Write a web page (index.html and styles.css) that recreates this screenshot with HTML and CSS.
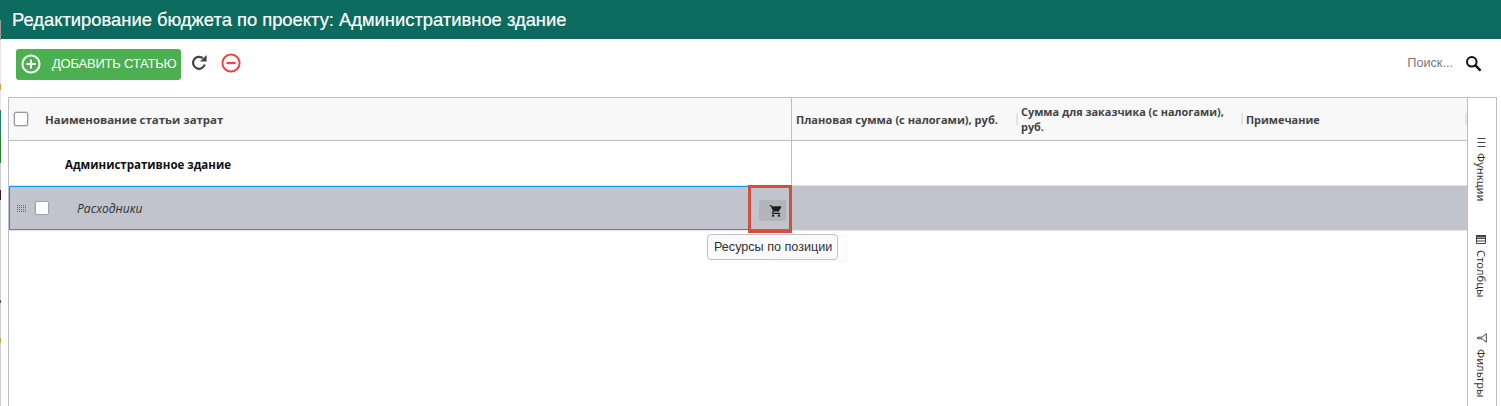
FILE: index.html
```html
<!DOCTYPE html>
<html lang="ru">
<head>
<meta charset="utf-8">
<title>Редактирование бюджета</title>
<link rel="stylesheet" href="styles.css">
</head>
<body>
<div class="app">
  <div class="edge"></div>
  <main class="page">
    <header class="title-bar">Редактирование бюджета по проекту: Административное здание</header>
    <div class="toolbar">
      <button class="add-btn">
        <svg class="add-icon" width="20" height="20" viewBox="0 0 20 20"><circle cx="10" cy="10" r="8.6" fill="none" stroke="#fff" stroke-width="2"/><path d="M10 5.400v9.200M5.400 10h9.200" stroke="#fff" stroke-width="2"/></svg>
        <span>ДОБАВИТЬ СТАТЬЮ</span>
      </button>
      <svg class="tool-icon refresh" width="16" height="16" viewBox="0 0 16 16"><path d="M13.800 9.500A6 6 0 1 1 11.900 3.200" fill="none" stroke="#444" stroke-width="2.200"/><path d="M9 6.600h6.600V0z" fill="#444"/></svg>
      <svg class="tool-icon remove" width="20" height="20" viewBox="0 0 20 20"><circle cx="10" cy="10" r="8.600" fill="none" stroke="#f0453a" stroke-width="2"/><path d="M5.400 10h9.200" stroke="#f0453a" stroke-width="2.200"/></svg>
      <div class="search">
        <span class="search-text">Поиск...</span>
        <svg width="17" height="17" viewBox="0 0 17 17"><circle cx="6.800" cy="6.800" r="4.800" fill="none" stroke="#111" stroke-width="2"/><path d="M10.400 10.400l5.200 5.200" stroke="#111" stroke-width="2.400"/></svg>
      </div>
    </div>
    <section class="grid">
      <div class="grid-main">
        <div class="grid-head">
          <div class="head-left">
            <span class="checkbox head-check"></span>
            <span class="head-title">Наименование статьи затрат</span>
          </div>
          <div class="head-right">
            <div class="col col-plan">Плановая сумма (с налогами), руб.</div>
            <div class="col col-client">Сумма для заказчика (с налогами), руб.</div>
            <div class="col col-note">Примечание</div>
          </div>
        </div>
        <div class="row row-group">
          <div class="cell-left group-name">Административное здание</div>
          <div class="cell-right"></div>
        </div>
        <div class="row row-selected">
          <div class="cell-left sel-left">
            <svg class="drag" width="10" height="7" viewBox="0 0 10 7"><path d="M0 .5h10M0 2.500h10M0 4.500h10M0 6.500h10" stroke="#666" stroke-dasharray="1 1" stroke-width="1"/></svg>
            <span class="checkbox row-check"></span>
            <span class="item-name">Расходники</span>
            <span class="cart-btn">
              <svg width="14" height="14" viewBox="0 0 24 24"><path fill="#1c1c1c" d="M7 18c-1.100 0-2 .9-2 2s.9 2 2 2 2-.9 2-2-.9-2-2-2zM1 2v2h2l3.600 7.600-1.400 2.400c-.1.300-.2.600-.2 1 0 1.100.9 2 2 2h12v-2H7.400c-.1 0-.2-.1-.2-.2v-.1L8.100 13h7.500c.7 0 1.400-.4 1.700-1l3.600-6.500c.1-.1.1-.3.1-.5 0-.6-.4-1-1-1H5.200l-.9-2H1zm16 16c-1.100 0-2 .9-2 2s.9 2 2 2 2-.9 2-2-.9-2-2-2z"/></svg>
            </span>
          </div>
          <div class="cell-right sel-right"></div>
          <div class="highlight"></div>
          <div class="tooltip-ghost"></div>
          <div class="tooltip">Ресурсы по позиции</div>
        </div>
      </div>
      <aside class="side">
        <div class="side-tab tab-func">
          <svg width="9" height="9" viewBox="0 0 9 9"><path d="M.5.5h8M.5 4.500h8M.5 8.500h8" stroke="#444"/></svg>
          <span>Функции</span>
        </div>
        <div class="side-tab tab-cols">
          <svg width="10" height="9" viewBox="0 0 10 9"><path d="M.5.5h9v8h-9zM.5 3.500h9M.5 6h9" fill="none" stroke="#444"/><path d="M0 0h10v2.500H0z" fill="#444"/></svg>
          <span>Столбцы</span>
        </div>
        <div class="side-tab tab-filter">
          <svg width="11" height="10" viewBox="0 0 11 10"><path d="M10.300.7v8.600L6 5.800H2L1 5l1-.8h4z" fill="none" stroke="#444"/></svg>
          <span>Фильтры</span>
        </div>
      </aside>
    </section>
  </main>
</div>
</body>
</html>
```
FILE: styles.css
```css
* { box-sizing: border-box; }
html, body { margin: 0; height: 100%; overflow: hidden; background: #fff; }
body { font-family: "Open Sans", sans-serif; color: #222; }
.app { display: flex; height: 406px; }
.edge {
  width: 1px; flex: none;
  background: linear-gradient(#0b6b5e 0 20px, #9a9a9a 20px 40px, #e5e5e5 40px 84px, #caa24a 84px 90px, #e5e5e5 90px 110px, #2a7a6a 110px 135px, #2e7d32 135px 163px, #cfcfcf 163px 190px, #3a1a2a 190px 200px, #cfcfcf 200px 300px, #6a4a2a 300px 303px, #cfcfcf 303px 338px, #caa24a 338px 343px, #cfcfcf 343px);
}
.page { flex: 1; min-width: 0; display: flex; flex-direction: column; }
.title-bar {
  height: 39px; flex: none; background: #0b6b5e; color: #fff;
  font: 18.360px/39px "Liberation Sans", sans-serif; padding-left: 11px; white-space: nowrap;
  -webkit-text-stroke: .2px #fff;
}
.toolbar { height: 58px; flex: none; display: flex; align-items: flex-start; padding: 10px 19px 0 15px; }
.add-btn {
  width: 165px; height: 31px; border: 0; border-radius: 3px; background: #4caf50; color: #fff;
  display: flex; align-items: center; padding: 0 0 2px 5px; font: 13px "Liberation Sans", sans-serif; letter-spacing: -.21px;
}
.add-btn span { margin-left: 11px; white-space: nowrap; }
.tool-icon { flex: none; }
.refresh { margin: 6px 0 0 10px; }
.remove { margin: 4px 0 0 14px; }
.search { margin-left: auto; display: flex; align-items: center; height: 28px; }
.search-text { font: 12.700px "Liberation Sans", sans-serif; color: #777; margin-right: 12px; }
.grid {
  margin: 0 4px 0 7px; flex: 1; min-height: 0; display: flex;
  border: 1px solid #bcbfc7; border-bottom: 0;
}
.grid-main { flex: 1; min-width: 0; display: flex; flex-direction: column; }
.grid-head { height: 43px; display: flex; background: #f8f8f8; border-bottom: 1px solid #bcbfc7; flex: none; }
.head-left { width: 783px; flex: none; display: flex; align-items: center; border-right: 1px solid #bcbfc7; padding-left: 5px; }
.checkbox { display: block; width: 14px; height: 14px; border: 1px solid #999; border-radius: 2px; background: #fff; flex: none; box-shadow: 0 0 0 .5px #bbb; }
.head-title { margin-left: 17px; font-size: 11.450px; font-weight: 700; color: #444; white-space: nowrap; }
.head-right { flex: 1; display: flex; align-items: center; min-width: 0; }
.col { font-size: 10.900px; font-weight: 700; line-height: 15px; color: #444; padding-left: 5px; }
.col-plan { width: 224px; padding-left: 4px; font-size: 11.050px; }
.col-client { width: 225px; padding-right: 8px; }
.col-note { flex: 1; }
.col-client, .col-note { position: relative; }
.col-client::before, .col-note::before, .col-note::after {
  content: ""; position: absolute; left: 0; top: 50%; height: 12px; margin-top: -6px; width: 2px; background: #e2e4ea;
}
.col-note::after { left: auto; right: 0; }
.row { display: flex; flex: none; position: relative; }
.row-group { height: 45px; border-bottom: 1px solid #dfe1e6; }
.cell-left { width: 783px; flex: none; }
.cell-right { flex: 1; }
.row-group .cell-left { border-right: 1px solid #bcbfc7; }
.group-name { font-size: 11.500px; font-weight: 700; color: #111; line-height: 47px; padding-left: 56px; }
.row-selected { height: 45px; background: #c1c4cd; border-bottom: 1px solid #e6e7ea; }
.sel-left { display: flex; align-items: center; border: 1px solid #0d9af0; padding-left: 7px; position: relative; }
.drag { flex: none; }
.row-check { margin-left: 8px; border-color: #a3a3a3; }
.item-name { margin-left: 28px; font-size: 12.100px; font-style: italic; color: #333; }
.cart-btn {
  width: 27px; height: 21px; border-radius: 2px; background: #b3b4b9; display: flex; align-items: center; padding-left: 10px;
  position: absolute; left: 749px; top: 13px;
}
.highlight { position: absolute; left: 739px; top: -1px; width: 44px; height: 48px; border: 3px solid #d0503f; }
.tooltip-ghost { position: absolute; left: 763px; top: 49px; width: 75px; height: 27px; background: #fdfdfd; border: 1px solid #f6f6f6; border-radius: 2px; }
.tooltip {
  position: absolute; left: 698px; top: 48px; height: 26px; padding: 0 5px 0 6px; background: #fafafa;
  border: 1px solid #c2c2c2; border-radius: 4px; font: 12.600px/24px "Liberation Sans", sans-serif; color: #333; white-space: nowrap;
}
.side { width: 29px; flex: none; border-left: 1px solid #bcbfc7; padding-right: 2px; display: flex; flex-direction: column; align-items: center; }
.side-tab {
  writing-mode: vertical-rl; display: flex; align-items: center; gap: 6px; font: 11.200px "Noto Sans", sans-serif; color: #333; white-space: nowrap;
}
.side-tab svg { flex: none; }
.tab-func { margin-top: 40px; }
.tab-cols { margin-top: 34px; }
.tab-filter { margin-top: 35px; }
```
